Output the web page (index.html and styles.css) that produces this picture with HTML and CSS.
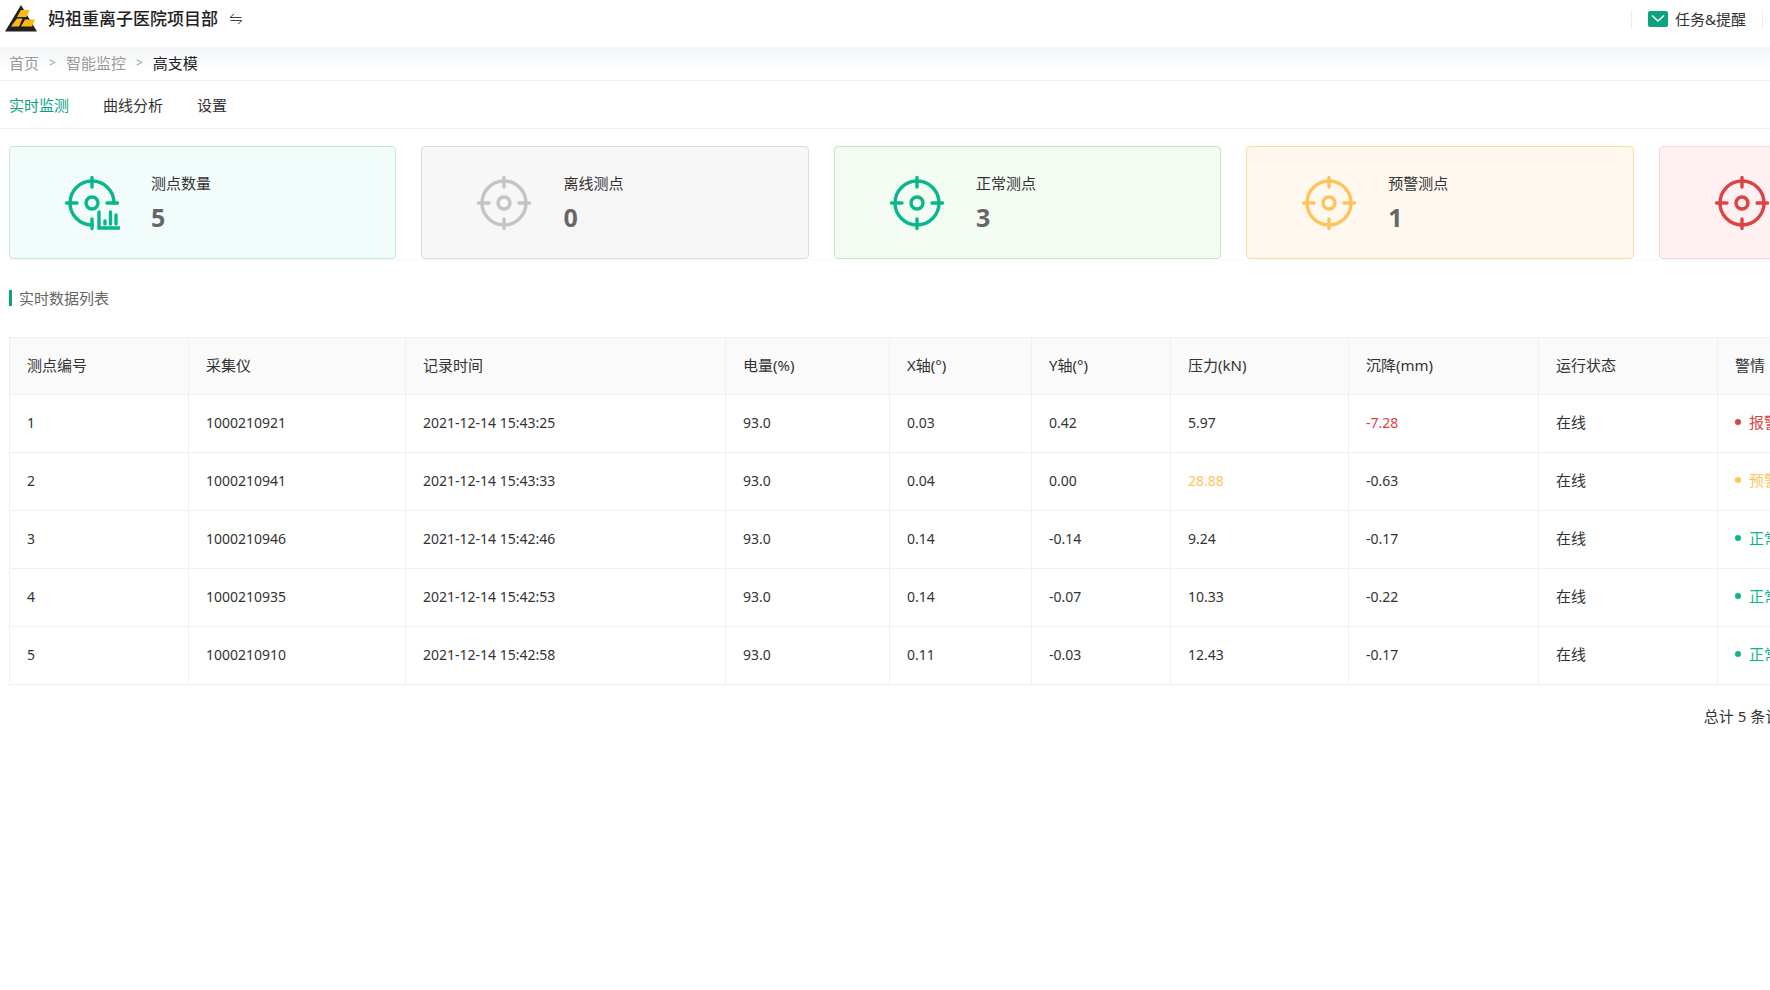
FILE: index.html
```html
<!DOCTYPE html>
<html lang="zh-CN">
<head>
<meta charset="utf-8">
<title>高支模</title>
<link rel="stylesheet" href="styles.css">
</head>
<body>
<svg class="sprite" aria-hidden="true">
  <symbol id="target" viewBox="0 0 56 56">
    <g fill="none" stroke="currentColor" stroke-width="3.400" stroke-linecap="round">
      <circle cx="28" cy="28" r="22"/>
      <circle cx="28" cy="28" r="6"/>
      <path d="M28 2.500V12M28 44v9.500M2.500 28H13M43 28h10.500"/>
    </g>
  </symbol>
  <symbol id="target-chart" viewBox="0 0 56 56">
    <g fill="none" stroke="currentColor" stroke-width="3.400" stroke-linecap="round">
      <path d="M28 50A22 22 0 1 1 50 28"/>
      <circle cx="28" cy="28" r="6"/>
      <path d="M28 2.500V12M28 44v9.500M2.500 28H13M43 28h10.500M35 37v16h20M41 46v3M46.500 37v12M52 40v9"/>
    </g>
  </symbol>
</svg>
<header class="topbar">
  <svg class="logo" viewBox="0 0 32 28" aria-hidden="true">
    <path d="M16 0 32 26.500H0z" fill="#231f20"/>
    <path d="M16 5h8.500l-3 7H12zM12 13.500h5.500l-3.500 8H6zM20 14.500h10l-3 7H16z" fill="#fdb913"/>
  </svg>
  <h1 class="project">妈祖重离子医院项目部</h1>
  <button class="switch" type="button" aria-label="切换项目">
    <svg viewBox="0 0 14 12" width="14" height="12" fill="none" stroke="#444" aria-hidden="true"><path d="M1 4.500h11.500M1 4.500 5 1M13 7.500H1.500M13 7.500 9 11"/></svg>
  </button>
  <button class="tasks" type="button">
    <svg viewBox="0 0 20 16" width="20" height="16" aria-hidden="true"><rect width="20" height="16" rx="2" fill="#0da37f"/><path d="M4 4.500 10 10l6-5.500" fill="none" stroke="#fff" stroke-width="1.500"/></svg>
    任务&amp;提醒
  </button>
</header>
<nav class="crumbs" aria-label="breadcrumb">
  <a href="#">首页</a><span>&gt;</span><a href="#">智能监控</a><span>&gt;</span><b>高支模</b>
</nav>
<nav class="tabs">
  <a class="active" href="#">实时监测</a><a href="#">曲线分析</a><a href="#">设置</a>
</nav>
<main class="page">
  <section class="cards">
    <article class="card total"><svg class="icon"><use href="#target-chart"/></svg><div><p>测点数量</p><strong>5</strong></div></article>
    <article class="card offline"><svg class="icon"><use href="#target"/></svg><div><p>离线测点</p><strong>0</strong></div></article>
    <article class="card normal"><svg class="icon"><use href="#target"/></svg><div><p>正常测点</p><strong>3</strong></div></article>
    <article class="card warning"><svg class="icon"><use href="#target"/></svg><div><p>预警测点</p><strong>1</strong></div></article>
    <article class="card alarm"><svg class="icon"><use href="#target"/></svg><div><p>报警测点</p><strong>1</strong></div></article>
  </section>
  <h2 class="section-title">实时数据列表</h2>
  <table class="data">
    <colgroup><col class="c-id"><col class="c-device"><col class="c-time"><col class="c-power"><col class="c-x"><col class="c-y"><col class="c-press"><col class="c-sink"><col class="c-run"><col></colgroup>
    <thead>
      <tr><th>测点编号</th><th>采集仪</th><th>记录时间</th><th>电量(%)</th><th>X轴(°)</th><th>Y轴(°)</th><th>压力(kN)</th><th>沉降(mm)</th><th>运行状态</th><th>警情</th></tr>
    </thead>
    <tbody>
      <tr><td>1</td><td>1000210921</td><td>2021-12-14 15:43:25</td><td>93.0</td><td>0.03</td><td>0.42</td><td>5.97</td><td class="red">-7.28</td><td class="zh">在线</td><td class="zh red"><span class="state">报警</span></td></tr>
      <tr><td>2</td><td>1000210941</td><td>2021-12-14 15:43:33</td><td>93.0</td><td>0.04</td><td>0.00</td><td class="amber">28.88</td><td>-0.63</td><td class="zh">在线</td><td class="zh amber"><span class="state">预警</span></td></tr>
      <tr><td>3</td><td>1000210946</td><td>2021-12-14 15:42:46</td><td>93.0</td><td>0.14</td><td>-0.14</td><td>9.24</td><td>-0.17</td><td class="zh">在线</td><td class="zh green"><span class="state">正常</span></td></tr>
      <tr><td>4</td><td>1000210935</td><td>2021-12-14 15:42:53</td><td>93.0</td><td>0.14</td><td>-0.07</td><td>10.33</td><td>-0.22</td><td class="zh">在线</td><td class="zh green"><span class="state">正常</span></td></tr>
      <tr><td>5</td><td>1000210910</td><td>2021-12-14 15:42:58</td><td>93.0</td><td>0.11</td><td>-0.03</td><td>12.43</td><td>-0.17</td><td class="zh">在线</td><td class="zh green"><span class="state">正常</span></td></tr>
    </tbody>
  </table>
  <p class="summary">总计 5 条记录</p>
</main>
</body>
</html>
```
FILE: styles.css
```css
* { box-sizing: border-box; }
html { overflow-x: hidden; }
body {
  margin: 0;
  overflow-x: hidden;
  background: #fff;
  color: #333;
  font: 15px/24px "Noto Sans", "Noto Sans CJK SC", sans-serif;
}
h1, h2, p { margin: 0; }
a { color: inherit; text-decoration: none; }
button { border: 0; padding: 0; background: none; color: inherit; font: inherit; }
.sprite { display: none; }

.topbar {
  display: flex;
  align-items: center;
  height: 47px;
  padding: 0 7px 9px 5px;
}
.logo { width: 32px; height: 28px; }
.project { margin-left: 11px; font-size: 17px; font-weight: 500; color: #222; }
.switch { display: flex; margin-left: 11px; }
.tasks {
  display: flex;
  align-items: center;
  gap: 7px;
  height: 19px;
  margin-left: auto;
  padding: 0 16px;
  border: solid #eee;
  border-width: 0 1px;
}

.crumbs {
  display: flex;
  gap: 10px;
  height: 34px;
  padding: 4px 9px;
  border-bottom: 1px solid #f0f0f0;
  background: linear-gradient(#f3f5f7, #fff 24px);
  color: #999;
}
.crumbs span { font-size: 12px; }
.crumbs b { font-weight: 400; color: #222; }

.tabs {
  display: flex;
  gap: 34px;
  height: 48px;
  padding: 12px 9px;
  border-bottom: 1px solid #f0f0f0;
}
.tabs .active { color: #0da37f; }

.page { width: 116%; padding: 17px 7px 0 9px; }
.cards {
  display: grid;
  grid-template-columns: repeat(5, 1fr);
  gap: 25px;
  border-bottom: 1px solid #f8f8f8;
}
.card {
  display: flex;
  align-items: center;
  gap: 31px;
  height: 113px;
  padding-left: 54px;
  border: 1px solid;
  border-radius: 4px;
}
.icon { width: 56px; height: 56px; }
.card p { color: #333; }
.card strong { display: block; padding-top: 4px; font-size: 25px; line-height: 36px; color: #666; }
.total { background: #f2fdfb; border-color: #c3e8db; color: #0ab68b; }
.offline { background: #f7f7f7; border-color: #ddd; color: #c4c4c4; }
.normal { background: #f2fcf3; border-color: #c5e6c6; color: #0ab68b; }
.warning { background: #fff8ee; border-color: #ffdc9d; color: #ffc35c; }
.alarm { background: #fff0f1; border-color: #ffd4d5; color: #dc4343; }

.section-title {
  display: flex;
  align-items: center;
  gap: 7px;
  margin: 26px 0 27px;
  font-size: 15px;
  font-weight: 400;
  color: #666;
}
.section-title::before { content: ""; width: 3px; height: 16px; background: #0da37f; }

.data { width: 100%; table-layout: fixed; border-collapse: collapse; }
.c-id { width: 179px; }
.c-device { width: 217px; }
.c-time { width: 320px; }
.c-power { width: 164px; }
.c-x { width: 142px; }
.c-y { width: 139px; }
.c-press { width: 178px; }
.c-sink { width: 190px; }
.c-run { width: 179px; }
.data th, .data td {
  height: 58px;
  padding: 0 17px;
  border: 1px solid #f0f0f0;
  text-align: left;
}
.data th { height: 57px; padding-bottom: 2px; background: #fafafa; font-size: 15px; font-weight: 400; }
.data td { padding-bottom: 1px; font-size: 14px; }
.data .zh { padding-bottom: 3px; font-size: 15px; }
.data .red { color: #dc4343; }
.data .amber { color: #ffc35c; }
.data .green { color: #0ab68b; }
.state { display: flex; align-items: center; gap: 8px; }
.state::before { content: ""; width: 6px; height: 6px; border-radius: 50%; background: currentColor; }
.summary { padding: 19px 251px 21px 0; text-align: right; }
```
